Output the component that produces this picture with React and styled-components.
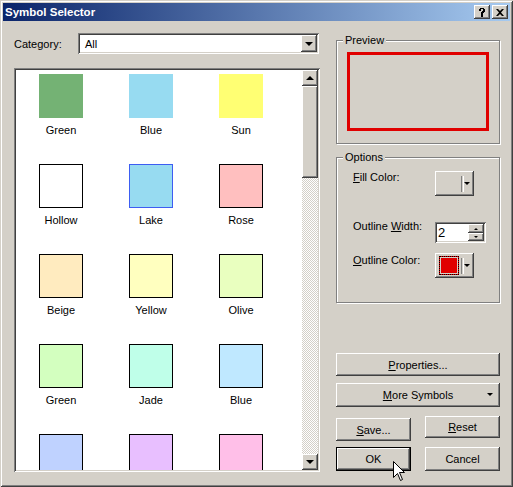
import styled, { createGlobalStyle } from 'styled-components';

const GlobalStyle = createGlobalStyle`
  body {
    margin: 0;
    font-family: 'Liberation Sans', Arial, sans-serif;
    font-size: 11px;
    color: #000;
  }
`;

// classic 3D edges
const raised = `
  box-shadow: inset -1px -1px #404040, inset 1px 1px #fff,
    inset -2px -2px #808080, inset 2px 2px #d4d0c8;
`;

const sunken = `
  box-shadow: inset 1px 1px #808080, inset -1px -1px #fff,
    inset 2px 2px #404040, inset -2px -2px #d4d0c8;
`;

// dialog frame
const Window = styled.div`
  position: relative;
  width: 513px;
  height: 487px;
  box-sizing: border-box;
  padding: 3px;
  background: #d4d0c8;
  box-shadow: inset 1px 1px #d4d0c8, inset -1px -1px #404040,
    inset 2px 2px #fff, inset -2px -2px #808080;
  display: flex;
  flex-direction: column;
  overflow: hidden;
`;

const TitleBar = styled.div`
  height: 18px;
  display: flex;
  align-items: center;
  padding: 0 2px 0 2px;
  background: linear-gradient(to right, #0a246a, #a6caf0);
`;

const Title = styled.div`
  flex: 1;
  color: #fff;
  font-weight: bold;
  font-size: 11.5px;
  white-space: nowrap;
`;

const CaptionButton = styled.div`
  width: 16px;
  height: 14px;
  box-sizing: border-box;
  background: #d4d0c8;
  ${raised}
  display: flex;
  align-items: center;
  justify-content: center;
  margin-left: ${p => (p.$gap ? '2px' : '0')};
`;

const Body = styled.div`
  flex: 1;
  display: flex;
  gap: 16px;
  padding: 12px 10px 0 11px;
`;

// left side: category + symbol list
const LeftColumn = styled.div`
  width: 306px;
  display: flex;
  flex-direction: column;
`;

const CategoryRow = styled.div`
  display: flex;
  align-items: center;
  height: 21px;
`;

const FieldLabel = styled.div`
  width: ${p => p.$width || 'auto'};
  white-space: nowrap;
`;

const Combo = styled.div`
  width: 241px;
  height: 21px;
  box-sizing: border-box;
  padding: 2px;
  background: #fff;
  ${sunken}
  display: flex;
  align-items: center;
`;

const ComboText = styled.div`
  flex: 1;
  padding-left: 5px;
`;

const ArrowButton = styled.div`
  width: ${p => p.$w || 16}px;
  height: ${p => p.$h || 16}px;
  box-sizing: border-box;
  background: #d4d0c8;
  ${raised}
  display: flex;
  align-items: center;
  justify-content: center;
  flex: none;
`;

const Triangle = styled.div`
  width: 0;
  height: 0;
  border-left: ${p => p.$size || 4}px solid transparent;
  border-right: ${p => p.$size || 4}px solid transparent;
  ${p => (p.$up ? 'border-bottom' : 'border-top')}: ${p => p.$size || 4}px solid #000;
`;

const ListBox = styled.div`
  margin-top: 14px;
  height: 404px;
  box-sizing: border-box;
  padding: 2px;
  background: #fff;
  ${sunken}
  display: flex;
`;

const SymbolGrid = styled.div`
  flex: 1;
  display: grid;
  grid-template-columns: repeat(3, 90px);
  grid-auto-rows: 90px;
  align-content: start;
  overflow: hidden;
`;

const SymbolItem = styled.div`
  display: flex;
  flex-direction: column;
  align-items: center;
  padding-top: 4px;
`;

const Swatch = styled.div`
  width: 44px;
  height: 44px;
  box-sizing: border-box;
  background: ${p => p.$fill};
  border: 1px solid ${p => p.$outline || p.$fill};
`;

const SymbolName = styled.div`
  margin-top: 6px;
  line-height: 13px;
`;

const ScrollBar = styled.div`
  width: 16px;
  display: flex;
  flex-direction: column;
  background: repeating-conic-gradient(#fff 0 25%, #d4d0c8 0 50%) 0 0 / 2px 2px;
`;

const Thumb = styled.div`
  height: 92px;
  box-sizing: border-box;
  background: #d4d0c8;
  ${raised}
`;

const Track = styled.div`
  flex: 1;
`;

// right side: preview, options, buttons
const RightColumn = styled.div`
  width: 164px;
  display: flex;
  flex-direction: column;
`;

const GroupBox = styled.fieldset`
  margin: ${p => p.$top || 0}px 0 0 0;
  padding: 0;
  height: ${p => p.$height}px;
  box-sizing: border-box;
  border: 1px solid #808080;
  box-shadow: 1px 1px 0 #fff, inset 1px 1px 0 #fff;
  min-width: 0;
`;

const Legend = styled.legend`
  margin-left: 6px;
  padding: 0 2px;
  background: #d4d0c8;
  line-height: 13px;
  color: #000;
`;

const PreviewArea = styled.div`
  margin: 5px 0 0 10px;
  width: 142px;
  height: 79px;
  box-sizing: border-box;
  border: 3px solid #e00000;
`;

const OptionsBody = styled.div`
  padding: 2px 0 0 16px;
  display: flex;
  flex-direction: column;
`;

const OptionRow = styled.div`
  display: flex;
  align-items: flex-start;
  margin-top: ${p => p.$top}px;
`;

const OptionLabel = styled.div`
  width: 82px;
  margin-top: ${p => p.$nudge || 0}px;
  line-height: 13px;
`;

const ColorButton = styled.div`
  width: 39px;
  height: 25px;
  box-sizing: border-box;
  background: #d4d0c8;
  ${raised}
  display: flex;
  align-items: center;
  padding: 0 4px 0 4px;
`;

const ColorWell = styled.div`
  width: 22px;
  height: 19px;
  box-sizing: border-box;
  border: 1px dotted #000;
  background: ${p => p.$color || 'transparent'};
  visibility: ${p => (p.$color ? 'visible' : 'hidden')};
  box-shadow: inset 0 0 0 1px #d4d0c8;
`;

const Separator = styled.div`
  width: 1px;
  height: 16px;
  margin-left: 2px;
  border-left: 1px solid #808080;
  border-right: 1px solid #fff;
`;

const SmallArrow = styled.div`
  flex: 1;
  display: flex;
  justify-content: center;
`;

const SpinBox = styled.div`
  width: 51px;
  height: 21px;
  box-sizing: border-box;
  padding: 2px;
  background: #fff;
  ${sunken}
  display: flex;
`;

const SpinText = styled.div`
  flex: 1;
  padding-left: 1px;
  font-size: 13px;
  line-height: 17px;
`;

const SpinButtons = styled.div`
  display: flex;
  flex-direction: column;
`;

const PushButton = styled.div`
  width: ${p => p.$width || 164}px;
  height: ${p => p.$height || 23}px;
  margin-top: ${p => p.$top || 0}px;
  box-sizing: border-box;
  background: #d4d0c8;
  ${p =>
    p.$default
      ? `border: 1px solid #000;
  box-shadow: inset -1px -1px #404040, inset 1px 1px #fff, inset -2px -2px #808080;`
      : raised}
  display: flex;
  align-items: center;
  justify-content: center;
  position: relative;
  flex: none;
`;

const ButtonArrow = styled.div`
  position: absolute;
  right: 7px;
  top: 10px;
`;

const ButtonRow = styled.div`
  display: flex;
  align-items: flex-start;
  justify-content: space-between;
  margin-top: ${p => p.$top}px;
`;

const Cursor = styled.svg`
  position: absolute;
  left: 393px;
  top: 461px;
`;

const symbols = [
  { name: 'Green', fill: '#74b274' },
  { name: 'Blue', fill: '#97dbf1' },
  { name: 'Sun', fill: '#ffff73' },
  { name: 'Hollow', fill: '#fff', outline: '#000' },
  { name: 'Lake', fill: '#97dbf1', outline: '#3d5df2' },
  { name: 'Rose', fill: '#ffbfbf', outline: '#000' },
  { name: 'Beige', fill: '#ffebbf', outline: '#000' },
  { name: 'Yellow', fill: '#ffffbf', outline: '#000' },
  { name: 'Olive', fill: '#e9ffbf', outline: '#000' },
  { name: 'Green', fill: '#d3ffbf', outline: '#000' },
  { name: 'Jade', fill: '#bfffe9', outline: '#000' },
  { name: 'Blue', fill: '#bfe8ff', outline: '#000' },
  // last row only shows its swatches above the fold
  { fill: '#bfd2ff', outline: '#000' },
  { fill: '#e8bfff', outline: '#000' },
  { fill: '#ffbfe8', outline: '#000' },
];

const App = () => {
  return (
    <>
      <GlobalStyle />
      <Window>
        <TitleBar>
          <Title>Symbol Selector</Title>
          <CaptionButton>
            <svg width="8" height="9" viewBox="0 0 8 9">
              <path d="M1 1h1V0h4v1h1v3H6v1H5v2H3V4h1V3h1V1H3v2H1z M3 7h2v2H3z" fill="#000" />
            </svg>
          </CaptionButton>
          <CaptionButton $gap>
            <svg width="8" height="7" viewBox="0 0 8 7">
              <path d="M0 0h2l2 2 2-2h2L5 3.5 8 7H6L4 5 2 7H0l3-3.5z" fill="#000" />
            </svg>
          </CaptionButton>
        </TitleBar>

        <Body>
          <LeftColumn>
            <CategoryRow>
              <FieldLabel $width="64px">Category:</FieldLabel>
              <Combo>
                <ComboText>All</ComboText>
                <ArrowButton $w={16} $h={17}>
                  <Triangle />
                </ArrowButton>
              </Combo>
            </CategoryRow>

            <ListBox>
              <SymbolGrid>
                {symbols.map((s, i) => (
                  <SymbolItem key={i}>
                    <Swatch $fill={s.fill} $outline={s.outline} />
                    {s.name && <SymbolName>{s.name}</SymbolName>}
                  </SymbolItem>
                ))}
              </SymbolGrid>
              <ScrollBar>
                <ArrowButton>
                  <Triangle $up />
                </ArrowButton>
                <Thumb />
                <Track />
                <ArrowButton>
                  <Triangle />
                </ArrowButton>
              </ScrollBar>
            </ListBox>
          </LeftColumn>

          <RightColumn>
            <GroupBox $top={1} $height={110}>
              <Legend>Preview</Legend>
              <PreviewArea />
            </GroupBox>

            <GroupBox $top={7} $height={152}>
              <Legend>Options</Legend>
              <OptionsBody>
                <OptionRow $top={5}>
                  <OptionLabel $nudge={0}>
                    <u>F</u>ill Color:
                  </OptionLabel>
                  <ColorButton>
                    <ColorWell />
                    <Separator />
                    <SmallArrow>
                      <Triangle $size={3} />
                    </SmallArrow>
                  </ColorButton>
                </OptionRow>
                <OptionRow $top={26}>
                  <OptionLabel $nudge={-2}>
                    Outline <u>W</u>idth:
                  </OptionLabel>
                  <SpinBox>
                    <SpinText>2</SpinText>
                    <SpinButtons>
                      <ArrowButton $w={16} $h={9}>
                        <Triangle $up $size={2} />
                      </ArrowButton>
                      <ArrowButton $w={16} $h={8}>
                        <Triangle $size={2} />
                      </ArrowButton>
                    </SpinButtons>
                  </SpinBox>
                </OptionRow>
                <OptionRow $top={10}>
                  <OptionLabel $nudge={1}>
                    <u>O</u>utline Color:
                  </OptionLabel>
                  <ColorButton>
                    <ColorWell $color="#e00000" />
                    <Separator />
                    <SmallArrow>
                      <Triangle $size={3} />
                    </SmallArrow>
                  </ColorButton>
                </OptionRow>
              </OptionsBody>
            </GroupBox>

            <PushButton $top={50}>
              <span>
                <u>P</u>roperties...
              </span>
            </PushButton>
            <PushButton $top={7} $height={24}>
              <span>
                <u>M</u>ore Symbols
              </span>
              <ButtonArrow>
                <Triangle $size={3} />
              </ButtonArrow>
            </PushButton>
            <ButtonRow $top={9}>
              <PushButton $width={75} $top={2}>
                <span>
                  <u>S</u>ave...
                </span>
              </PushButton>
              <PushButton $width={75} $height={22}>
                <span>
                  <u>R</u>eset
                </span>
              </PushButton>
            </ButtonRow>
            <ButtonRow $top={6}>
              <PushButton $width={75} $height={24} $default>
                OK
              </PushButton>
              <PushButton $width={75} $height={24}>
                Cancel
              </PushButton>
            </ButtonRow>
          </RightColumn>
        </Body>

        <Cursor width="13" height="21" viewBox="0 0 13 21">
          <path
            d="M0.5 0.5 V16.5 L4.5 12.5 L7.5 19.5 L9.5 18.5 L6.5 11.5 H11.5 Z"
            fill="#fff"
            stroke="#000"
            strokeWidth="1"
          />
        </Cursor>
      </Window>
    </>
  );
};

export default App;
